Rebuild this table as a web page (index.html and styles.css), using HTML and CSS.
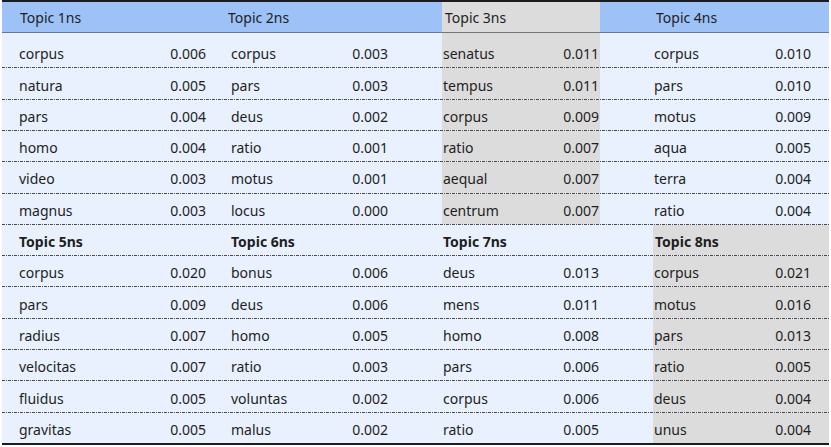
FILE: index.html
```html
<!DOCTYPE html>
<html>
<head>
<meta charset="utf-8">
<link rel="stylesheet" href="styles.css">
</head>
<body>
<div class="tbl">
  <div class="row head">
    <div class="g">Topic 1ns</div>
    <div class="g">Topic 2ns</div>
    <div class="g hl">Topic 3ns</div>
    <div class="g">Topic 4ns</div>
  </div>
  <div class="row first">
    <div class="g"><span>corpus</span><span>0.006</span></div>
    <div class="g"><span>corpus</span><span>0.003</span></div>
    <div class="g hl"><span>senatus</span><span>0.011</span></div>
    <div class="g"><span>corpus</span><span>0.010</span></div>
  </div>
  <div class="row">
    <div class="g"><span>natura</span><span>0.005</span></div>
    <div class="g"><span>pars</span><span>0.003</span></div>
    <div class="g hl"><span>tempus</span><span>0.011</span></div>
    <div class="g"><span>pars</span><span>0.010</span></div>
  </div>
  <div class="row">
    <div class="g"><span>pars</span><span>0.004</span></div>
    <div class="g"><span>deus</span><span>0.002</span></div>
    <div class="g hl"><span>corpus</span><span>0.009</span></div>
    <div class="g"><span>motus</span><span>0.009</span></div>
  </div>
  <div class="row">
    <div class="g"><span>homo</span><span>0.004</span></div>
    <div class="g"><span>ratio</span><span>0.001</span></div>
    <div class="g hl"><span>ratio</span><span>0.007</span></div>
    <div class="g"><span>aqua</span><span>0.005</span></div>
  </div>
  <div class="row">
    <div class="g"><span>video</span><span>0.003</span></div>
    <div class="g"><span>motus</span><span>0.001</span></div>
    <div class="g hl"><span>aequal</span><span>0.007</span></div>
    <div class="g"><span>terra</span><span>0.004</span></div>
  </div>
  <div class="row">
    <div class="g"><span>magnus</span><span>0.003</span></div>
    <div class="g"><span>locus</span><span>0.000</span></div>
    <div class="g hl"><span>centrum</span><span>0.007</span></div>
    <div class="g"><span>ratio</span><span>0.004</span></div>
  </div>
  <div class="row bold">
    <div class="g">Topic 5ns</div>
    <div class="g">Topic 6ns</div>
    <div class="g">Topic 7ns</div>
    <div class="g hl">Topic 8ns</div>
  </div>
  <div class="row">
    <div class="g"><span>corpus</span><span>0.020</span></div>
    <div class="g"><span>bonus</span><span>0.006</span></div>
    <div class="g"><span>deus</span><span>0.013</span></div>
    <div class="g hl"><span>corpus</span><span>0.021</span></div>
  </div>
  <div class="row">
    <div class="g"><span>pars</span><span>0.009</span></div>
    <div class="g"><span>deus</span><span>0.006</span></div>
    <div class="g"><span>mens</span><span>0.011</span></div>
    <div class="g hl"><span>motus</span><span>0.016</span></div>
  </div>
  <div class="row">
    <div class="g"><span>radius</span><span>0.007</span></div>
    <div class="g"><span>homo</span><span>0.005</span></div>
    <div class="g"><span>homo</span><span>0.008</span></div>
    <div class="g hl"><span>pars</span><span>0.013</span></div>
  </div>
  <div class="row">
    <div class="g"><span>velocitas</span><span>0.007</span></div>
    <div class="g"><span>ratio</span><span>0.003</span></div>
    <div class="g"><span>pars</span><span>0.006</span></div>
    <div class="g hl"><span>ratio</span><span>0.005</span></div>
  </div>
  <div class="row">
    <div class="g"><span>fluidus</span><span>0.005</span></div>
    <div class="g"><span>voluntas</span><span>0.002</span></div>
    <div class="g"><span>corpus</span><span>0.006</span></div>
    <div class="g hl"><span>deus</span><span>0.004</span></div>
  </div>
  <div class="row last">
    <div class="g"><span>gravitas</span><span>0.005</span></div>
    <div class="g"><span>malus</span><span>0.002</span></div>
    <div class="g"><span>ratio</span><span>0.005</span></div>
    <div class="g hl"><span>unus</span><span>0.004</span></div>
  </div>
</div>
</body>
</html>
```

FILE: styles.css
```css
html, body {
  margin: 0;
  padding: 0;
  background: #ffffff;
}

.tbl {
  margin-left: 2px;
  width: 827px;
  border-top: 2px solid #1c1c1c;
  border-bottom: 2px solid #1c1c1c;
  background: #e8f1fd;
  font-family: "Noto Sans", "DejaVu Sans", sans-serif;
  font-size: 14px;
  color: #1e1e1e;
}

.row {
  display: grid;
  grid-template-columns: 205px 23px 159px 53px 158px 53px 176px;
  height: 31.3px;
  box-sizing: border-box;
  padding-top: 3px;
  padding-bottom: 1px;
  background-image: repeating-linear-gradient(to right, #4a4a4a 0 3px, transparent 3px 4px, #4a4a4a 4px 5px, transparent 5px 6px);
  background-size: 100% 1px;
  background-position: left bottom;
  background-repeat: no-repeat;
}

.row .g:nth-child(1) { grid-column: 1; padding-left: 17px; padding-right: 1px; }
.row .g:nth-child(2) { grid-column: 3; }
.row .g:nth-child(3) { grid-column: 5; }
.row .g:nth-child(4) { grid-column: 7; padding-right: 18px; }

.g {
  display: flex;
  justify-content: space-between;
  align-items: center;
  padding: 0 1px;
}

.row .hl {
  margin-top: -3px;
  padding-top: 3px;
}

.head {
  height: 31px;
  background: #9dc2f7;
  background-image: none;
  border-bottom: 1px solid #6f7680;
  padding-top: 0;
  padding-bottom: 0;
}

.head .hl {
  margin: 0;
  padding-top: 0;
}

.head .g:nth-child(1) { padding-left: 18px; }
.head .g:nth-child(2) { padding-left: 0; margin-left: -2px; }
.head .g:nth-child(3) { padding-left: 3px; }
.head .g:nth-child(4) { padding-left: 3px; }

.first {
  height: 35.4px;
  padding-top: 7px;
}

.first .hl {
  margin-top: -7px;
  padding-top: 7px;
}

.bold .g {
  font-weight: 700;
}

.bold .g:nth-child(4) { padding-left: 2px; }

.last {
  background-image: none;
  padding-bottom: 0;
  height: 30px;
}

.hl {
  background: #dcdcdc;
}
```
